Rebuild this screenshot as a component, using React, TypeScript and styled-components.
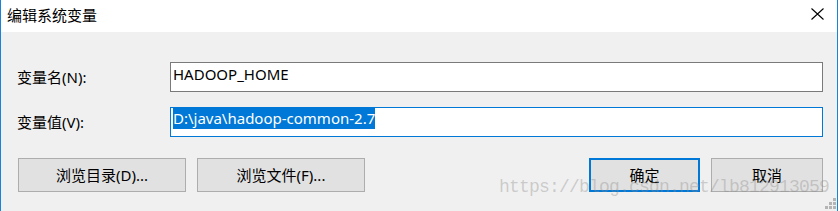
import React from 'react';
import styled, { createGlobalStyle } from 'styled-components';

const GlobalStyle = createGlobalStyle`
  html, body {
    margin: 0;
    padding: 0;
    background: #ffffff;
  }
  body {
    font-family: "Segoe UI", "Noto Sans", "Noto Sans CJK SC", sans-serif;
    font-size: 15px;
    color: #000000;
  }
`;

const Window = styled.div`
  position: relative;
  width: 838px;
  height: 211px;
  box-sizing: border-box;
  border-left: 1px solid #1883d7;
  border-right: 1px solid #1883d7;
  background: #f0f0f0;
  display: flex;
  flex-direction: column;
  overflow: hidden;
`;

const TitleBar = styled.div`
  height: 32px;
  flex: none;
  background: #ffffff;
  display: flex;
  align-items: center;
  justify-content: space-between;
  padding: 0 13px 0 6px;
`;

const Title = styled.span`
  font-size: 15px;
  line-height: 20px;
  margin-top: -2px;
`;

const CloseIcon = styled.svg`
  width: 13px;
  height: 12px;
  margin-top: -4px;
`;

const Body = styled.div`
  padding: 30px 14px 0 16px;
  display: grid;
  grid-template-columns: 153px 1fr;
  row-gap: 15px;
  align-items: center;
`;

const Label = styled.label`
  font-size: 15px;
  line-height: 20px;
`;

const Field = styled.div<{ $focused?: boolean }>`
  height: 30px;
  box-sizing: border-box;
  border: 1px solid ${p => (p.$focused ? '#0078d7' : '#7a7a7a')};
  background: #ffffff;
  padding: 0 2px;
  display: flex;
  align-items: flex-start;
  font-size: 15px;
`;

const FieldText = styled.span<{ $selected?: boolean }>`
  line-height: 21px;
  padding-top: ${p => (p.$selected ? '0' : '1px')};
  background: ${p => (p.$selected ? '#0078d7' : 'transparent')};
  color: ${p => (p.$selected ? '#ffffff' : '#000000')};
  white-space: pre;
`;

const ButtonRow = styled.div`
  margin-top: 21px;
  padding: 0 14px 0 17px;
  display: flex;
  justify-content: space-between;
`;

const ButtonGroup = styled.div`
  display: flex;
  gap: 11px;
`;

const Button = styled.button<{ $width: number; $default?: boolean }>`
  width: ${p => p.$width}px;
  height: 34px;
  box-sizing: border-box;
  margin: 0;
  padding: 0;
  background: #e1e1e1;
  border: ${p => (p.$default ? '2px solid #0078d7' : '1px solid #adadad')};
  font-family: inherit;
  font-size: 15px;
  line-height: 20px;
  color: #000000;
`;

const Watermark = styled.div`
  position: absolute;
  left: 498px;
  top: 177px;
  font-family: "Liberation Mono", "Courier New", monospace;
  font-size: 18px;
  letter-spacing: -0.8px;
  line-height: 20px;
  color: rgba(140, 140, 140, 0.38);
  pointer-events: none;
  white-space: nowrap;
`;

const Grip = styled.svg`
  position: absolute;
  right: 1px;
  bottom: 2px;
  width: 12px;
  height: 12px;
`;

const App = () => {
  return (
    <>
      <GlobalStyle />
      <Window>
        <TitleBar>
          <Title>编辑系统变量</Title>
          <CloseIcon viewBox="0 0 13 12">
            <path d="M0.5 0.5 L12.5 11.5 M12.5 0.5 L0.5 11.5" stroke="#000" strokeWidth="1.1" fill="none" />
          </CloseIcon>
        </TitleBar>
        <Body>
          <Label>变量名(N):</Label>
          <Field>
            <FieldText>HADOOP_HOME</FieldText>
          </Field>
          <Label>变量值(V):</Label>
          <Field $focused>
            <FieldText $selected>D:\java\hadoop-common-2.7</FieldText>
          </Field>
        </Body>
        <ButtonRow>
          <ButtonGroup>
            <Button $width={168}>浏览目录(D)...</Button>
            <Button $width={168}>浏览文件(F)...</Button>
          </ButtonGroup>
          <ButtonGroup>
            <Button $width={111} $default>确定</Button>
            <Button $width={112}>取消</Button>
          </ButtonGroup>
        </ButtonRow>
        <Watermark>https://blog.csdn.net/lb812913059</Watermark>
        <Grip viewBox="0 0 12 12">
          <rect x="9" y="1" width="3" height="3" fill="#b4b4b4" />
          <rect x="5" y="5" width="3" height="3" fill="#b4b4b4" />
          <rect x="9" y="5" width="3" height="3" fill="#b4b4b4" />
          <rect x="1" y="9" width="3" height="3" fill="#b4b4b4" />
          <rect x="5" y="9" width="3" height="3" fill="#b4b4b4" />
          <rect x="9" y="9" width="3" height="3" fill="#b4b4b4" />
        </Grip>
      </Window>
    </>
  );
};

export default App;
